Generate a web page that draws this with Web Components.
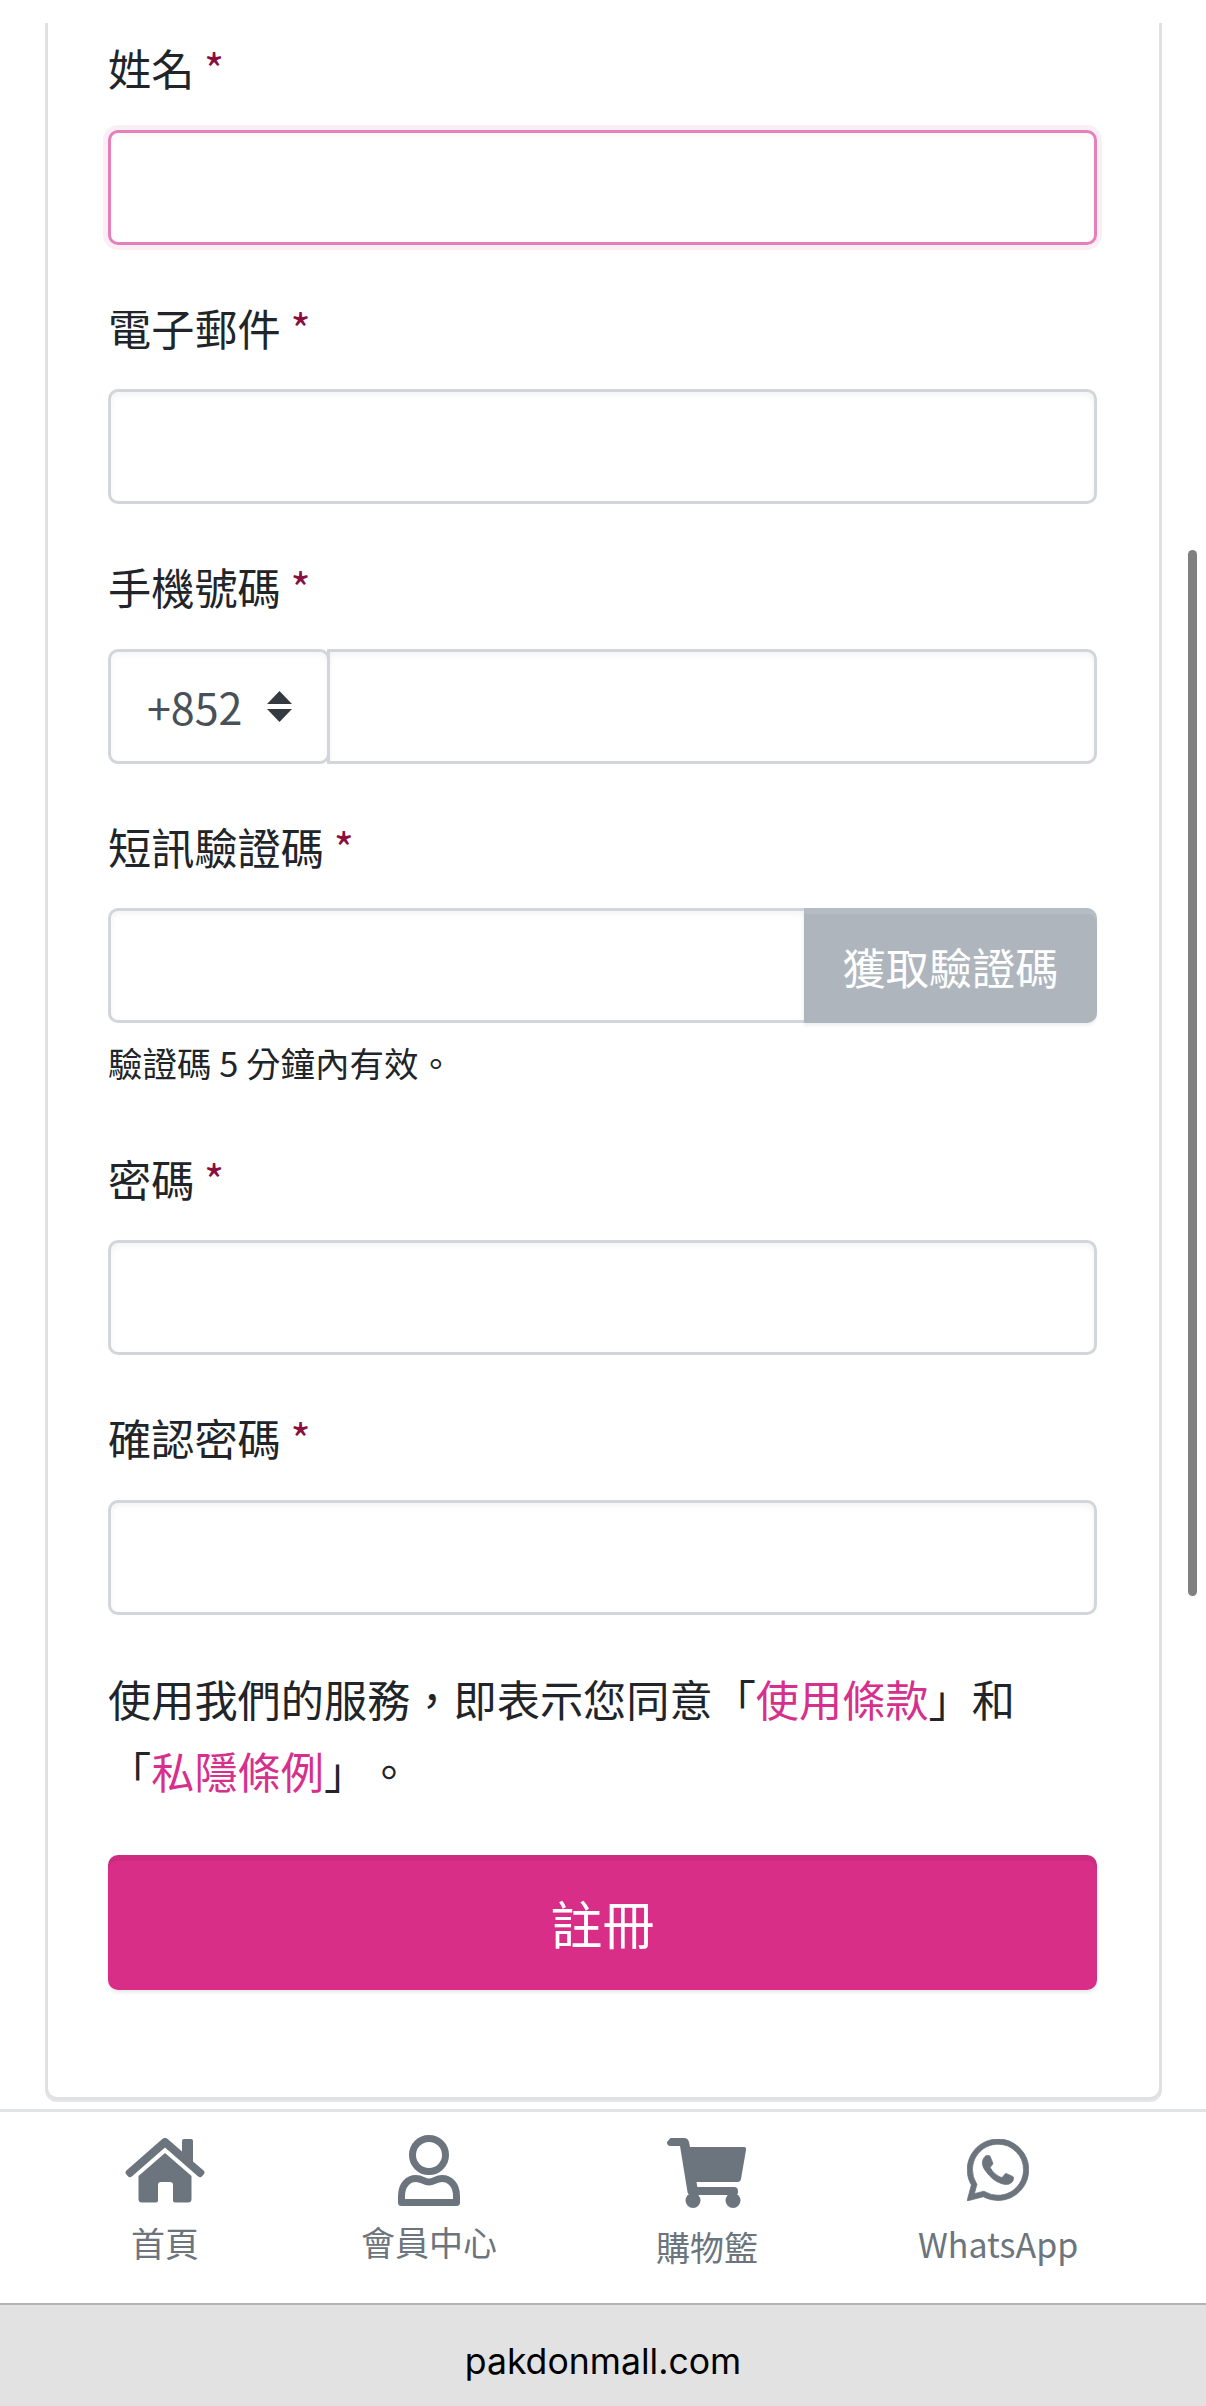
<!DOCTYPE HTML>
<html lang="zh-Hant">
    <head>
        <title>註冊</title>
        <meta charset="utf8">
        <meta name="viewport" content="width=device-width, initial-scale=1">
        <style>
            html, body {
                margin: 0;
                background-color: #fff;
            }

            body {
                font-family: "Noto Sans CJK TC", "Noto Sans", sans-serif;
                color: #212529;
                text-spacing-trim: space-all;
            }

            nav-item svg {
                display: block;
                fill: currentColor;
            }
        </style>
        <script>
            const FONT = `"Noto Sans CJK TC", "Noto Sans", sans-serif`

            class RegPage extends HTMLElement {
                connectedCallback(){
                    this.attachShadow({ mode: "open" }).innerHTML = `
                        <style>
                            :host {
                                display: flex;
                                flex-direction: column;
                                position: relative;
                                height: 100vh;
                                overflow: hidden;
                                background-color: #fff;
                            }
                            main {
                                flex: 1;
                                min-height: 0;
                                padding: 23px 44px 0 45px;
                            }
                            #thumb {
                                position: absolute;
                                top: 550px;
                                right: 9px;
                                width: 9px;
                                height: 1046px;
                                border-radius: 5px;
                                background-color: #808080;
                            }
                        </style>
                        <main><slot></slot></main>
                        <slot name="bottom"></slot>
                        <div id="thumb"></div>
                    `
                }
            }

            class FormCard extends HTMLElement {
                connectedCallback(){
                    this.attachShadow({ mode: "open" }).innerHTML = `
                        <style>
                            :host {
                                display: block;
                                box-sizing: border-box;
                                height: 2077px;
                                padding: 13px 62px 0 60px;
                                border: 3px solid #dfe1e3;
                                border-top: 0;
                                border-radius: 0 0 12px 12px;
                                box-shadow: 0 2px 0 #e6e6e6;
                                background-color: #fff;
                            }
                        </style>
                        <slot></slot>
                    `
                }
            }

            class FormField extends HTMLElement {
                connectedCallback(){
                    let label = this.getAttribute("label")

                    this.attachShadow({ mode: "open" }).innerHTML = `
                        <style>
                            :host {
                                display: block;
                                margin-bottom: 51px;
                                font-family: ${FONT};
                            }
                            label {
                                display: block;
                                height: 63px;
                                margin-bottom: 30.5px;
                                font-size: 43.2px;
                                line-height: 63px;
                                color: #212529;
                            }
                            span {
                                color: #8a0f3f;
                            }
                        </style>
                        <label>${label} <span>*</span></label>
                        <slot></slot>
                    `
                }
            }

            class TextBox extends HTMLElement {
                connectedCallback(){
                    this.attachShadow({ mode: "open" }).innerHTML = `
                        <style>
                            :host {
                                display: block;
                                flex: 1;
                                min-width: 0;
                            }
                            input {
                                display: block;
                                box-sizing: border-box;
                                width: 100%;
                                height: 115px;
                                padding: 0 36px;
                                border: 3px solid #d2d5da;
                                border-radius: 10px;
                                outline: 0;
                                background-color: #fff;
                                box-shadow: inset 0 3px 6px rgba(0,0,0,.05);
                                font: 43px ${FONT};
                            }
                            :host([focused]) input {
                                border-color: #e580bb;
                                box-shadow: inset 0 3px 6px rgba(0,0,0,.03), 0 0 0 5px #fbeff6;
                            }
                            :host([joined="left"]) input {
                                margin-left: -3px;
                                width: calc(100% + 3px);
                                border-radius: 0 10px 10px 0;
                            }
                            :host([joined="right"]) input {
                                border-radius: 10px 0 0 10px;
                                border-right: 0;
                            }
                        </style>
                        <input type="text">
                    `
                }
            }

            class InputRow extends HTMLElement {
                connectedCallback(){
                    this.attachShadow({ mode: "open" }).innerHTML = `
                        <style>
                            :host {
                                display: flex;
                                align-items: stretch;
                            }
                        </style>
                        <slot></slot>
                    `
                }
            }

            class CodeSelect extends HTMLElement {
                connectedCallback(){
                    this.attachShadow({ mode: "open" }).innerHTML = `
                        <style>
                            :host {
                                display: flex;
                                align-items: center;
                                justify-content: space-between;
                                box-sizing: border-box;
                                flex: none;
                                position: relative;
                                z-index: 1;
                                width: 222px;
                                height: 115px;
                                padding: 0 35px 0 36px;
                                border: 3px solid #d2d5da;
                                border-radius: 10px;
                                box-shadow: inset 0 3px 6px rgba(0,0,0,.04);
                                background-color: #fff;
                                font: 43px ${FONT};
                                color: #495057;
                            }
                            svg {
                                display: block;
                            }
                        </style>
                        <slot></slot>
                        <svg width="25" height="31" viewBox="0 0 25 31" fill="#343a40">
                            <path d="M12.5 0 25 13H0Z"/>
                            <path d="M0 18H25L12.5 31Z"/>
                        </svg>
                    `
                }
            }

            class SideButton extends HTMLElement {
                connectedCallback(){
                    this.attachShadow({ mode: "open" }).innerHTML = `
                        <style>
                            :host {
                                display: flex;
                                align-items: center;
                                justify-content: center;
                                box-sizing: border-box;
                                flex: none;
                                width: 293px;
                                height: 115px;
                                border-radius: 0 10px 10px 0;
                                background-color: #aeb5bd;
                                box-shadow: inset 0 6px 0 rgba(255,255,255,.1), 0 3px 3px rgba(0,0,0,.06);
                                font: 43.2px ${FONT};
                                color: #fff;
                            }
                        </style>
                        <slot></slot>
                    `
                }
            }

            class HelpText extends HTMLElement {
                connectedCallback(){
                    this.attachShadow({ mode: "open" }).innerHTML = `
                        <style>
                            :host {
                                display: block;
                                margin-top: 13px;
                                padding-bottom: 7.5px;
                                font: 34.5px/52px ${FONT};
                                color: #212529;
                            }
                        </style>
                        <slot></slot>
                    `
                }
            }

            class TermsNote extends HTMLElement {
                connectedCallback(){
                    this.attachShadow({ mode: "open" }).innerHTML = `
                        <style>
                            :host {
                                display: block;
                                margin: -3.5px 0 48.5px;
                                font: 43.2px/72px ${FONT};
                                color: #212529;
                                text-spacing-trim: space-all;
                            }
                            ::slotted(a) {
                                color: #d6308c;
                                text-decoration: none;
                            }
                        </style>
                        <slot></slot>
                    `
                }
            }

            class SubmitButton extends HTMLElement {
                connectedCallback(){
                    this.attachShadow({ mode: "open" }).innerHTML = `
                        <style>
                            :host {
                                display: flex;
                                align-items: center;
                                justify-content: center;
                                height: 135px;
                                border-radius: 10px;
                                background-color: #d92e87;
                                box-shadow: inset 0 6px 0 rgba(0,0,0,.05), 0 3px 3px rgba(0,0,0,.08);
                                font: 52px ${FONT};
                                color: #fff;
                            }
                        </style>
                        <slot></slot>
                    `
                }
            }

            class BottomNav extends HTMLElement {
                connectedCallback(){
                    this.attachShadow({ mode: "open" }).innerHTML = `
                        <style>
                            :host {
                                display: flex;
                                align-items: flex-start;
                                box-sizing: border-box;
                                flex: none;
                                height: 194px;
                                margin-top: 9px;
                                padding: 23px 0 0 125px;
                                border-top: 3px solid #e0e2e4;
                                background-color: #fff;
                            }
                        </style>
                        <slot></slot>
                    `
                }
            }

            class NavItem extends HTMLElement {
                connectedCallback(){
                    this.attachShadow({ mode: "open" }).innerHTML = `
                        <style>
                            :host {
                                display: flex;
                                flex-direction: column;
                                align-items: center;
                                color: #6c757d;
                            }
                            span {
                                font: 34px/48px ${FONT};
                                white-space: nowrap;
                            }
                        </style>
                        <slot></slot>
                        <span>${this.getAttribute("label")}</span>
                    `
                }
            }

            class AddressBar extends HTMLElement {
                connectedCallback(){
                    this.attachShadow({ mode: "open" }).innerHTML = `
                        <style>
                            :host {
                                display: flex;
                                align-items: center;
                                justify-content: center;
                                box-sizing: border-box;
                                flex: none;
                                height: 103px;
                                padding-top: 11px;
                                border-top: 2px solid #b4b4b4;
                                background-color: #e2e2e2;
                                font: 35.6px Inter, "Noto Sans", sans-serif;
                                color: #000;
                            }
                        </style>
                        <slot></slot>
                    `
                }
            }

            customElements.define("reg-page", RegPage)
            customElements.define("form-card", FormCard)
            customElements.define("form-field", FormField)
            customElements.define("text-box", TextBox)
            customElements.define("input-row", InputRow)
            customElements.define("code-select", CodeSelect)
            customElements.define("side-button", SideButton)
            customElements.define("help-text", HelpText)
            customElements.define("terms-note", TermsNote)
            customElements.define("submit-button", SubmitButton)
            customElements.define("bottom-nav", BottomNav)
            customElements.define("nav-item", NavItem)
            customElements.define("address-bar", AddressBar)
        </script>
    </head>
    <body>
        <reg-page>
            <form-card>
                <form-field label="姓名"><text-box focused></text-box></form-field>
                <form-field label="電子郵件"><text-box></text-box></form-field>
                <form-field label="手機號碼">
                    <input-row>
                        <code-select>+852</code-select>
                        <text-box joined="left"></text-box>
                    </input-row>
                </form-field>
                <form-field label="短訊驗證碼">
                    <input-row>
                        <text-box joined="right"></text-box>
                        <side-button>獲取驗證碼</side-button>
                    </input-row>
                    <help-text>驗證碼 5 分鐘內有效。</help-text>
                </form-field>
                <form-field label="密碼"><text-box></text-box></form-field>
                <form-field label="確認密碼"><text-box></text-box></form-field>
                <terms-note>使用我們的服務，即表示您同意「<a>使用條款</a>」和「<a>私隱條例</a>」。</terms-note>
                <submit-button>註冊</submit-button>
            </form-card>

            <bottom-nav slot="bottom">
                <nav-item label="首頁">
                    <svg style="margin: 3px 0 15.5px" width="80" height="65" viewBox="0 0 80 65">
                        <path d="M37 1.2a4.5 4.5 0 0 1 6 0L57 13.6V3a2 2 0 0 1 2-2h7a2 2 0 0 1 2 2V23.4L78.6 32.6a2.6 2.6 0 0 1 .2 3.6L76.8 38.4a2.6 2.6 0 0 1-3.6.2L40 9.6 6.8 38.6a2.6 2.6 0 0 1-3.6-.2L1.2 36.2a2.6 2.6 0 0 1 .2-3.6Z"/>
                        <path d="M40 15 66.5 38V61a3.5 3.5 0 0 1-3.5 3.5H50a2 2 0 0 1-2-2V47a3 3 0 0 0-3-3H36a3 3 0 0 0-3 3V62.5a2 2 0 0 1-2 2H17a3.5 3.5 0 0 1-3.5-3.5V38Z"/>
                    </svg>
                </nav-item>
                <nav-item label="會員中心" style="margin-left: 156px">
                    <svg style="margin: 0 0 12px; fill: none" width="62" height="71" viewBox="0 0 62 71" stroke="currentColor" stroke-width="7" stroke-linejoin="round">
                        <circle cx="31" cy="20" r="16.5"/>
                        <path d="M3.5 67.5V61C3.5 50 10 43.5 18 43.5 24 43.5 26 47 31 47S38 43.5 44 43.5C52 43.5 58.5 50 58.5 61V67.5Z"/>
                    </svg>
                </nav-item>
                <nav-item label="購物籃" style="margin-left: 159px">
                    <svg style="margin: 3px 0 14.5px" width="80" height="70" viewBox="0 0 80 70">
                        <path d="M3.5 0H17q4 0 5 4l1 5H77q2.5 0 2 3L74 41q-.6 3-3.5 3H29.5l.8 5H67q4 0 4 4v1q0 3-3 3H24q-3 0-3.5-3L13 8H3.5Q0 8 0 4 0 0 3.500Z"/>
                        <circle cx="26" cy="62.500" r="7.500"/>
                        <circle cx="66" cy="62.500" r="7.500"/>
                    </svg>
                </nav-item>
                <nav-item label="WhatsApp" style="margin-left: 160px">
                    <svg style="margin: 4px 0 19px" width="62" height="62" viewBox="0 0 16 16" stroke="currentColor" stroke-width=".2">
                        <path d="M13.601 2.326A7.854 7.854 0 0 0 7.994 0C3.627 0 .068 3.558.064 7.926c0 1.399.366 2.76 1.057 3.965L0 16l4.204-1.102a7.933 7.933 0 0 0 3.79.965h.004c4.368 0 7.926-3.558 7.93-7.93A7.898 7.898 0 0 0 13.6 2.326zM7.994 14.521a6.573 6.573 0 0 1-3.356-.92l-.24-.144-2.494.654.666-2.433-.156-.251a6.56 6.56 0 0 1-1.007-3.505c0-3.626 2.957-6.584 6.591-6.584a6.56 6.56 0 0 1 4.66 1.931 6.557 6.557 0 0 1 1.928 4.66c-.004 3.639-2.961 6.592-6.592 6.592zm3.615-4.934c-.197-.099-1.17-.578-1.353-.646-.182-.065-.315-.099-.445.099-.133.197-.513.646-.627.775-.114.133-.232.148-.43.05-.197-.1-.836-.308-1.592-.985-.59-.525-.985-1.175-1.103-1.372-.114-.198-.011-.304.088-.403.087-.088.197-.232.296-.346.1-.114.133-.198.198-.33.065-.134.034-.248-.015-.347-.05-.099-.445-1.076-.612-1.47-.16-.389-.323-.335-.445-.34-.114-.007-.247-.007-.38-.007a.729.729 0 0 0-.529.247c-.182.198-.691.677-.691 1.654 0 .977.71 1.916.81 2.049.098.133 1.394 2.132 3.383 2.992.47.205.84.326 1.129.418.475.152.904.129 1.246.08.38-.058 1.171-.48 1.338-.943.164-.464.164-.86.114-.943-.049-.084-.182-.133-.38-.232z"/>
                    </svg>
                </nav-item>
            </bottom-nav>

            <address-bar slot="bottom">pakdonmall.com</address-bar>
        </reg-page>
    </body>
</html>
